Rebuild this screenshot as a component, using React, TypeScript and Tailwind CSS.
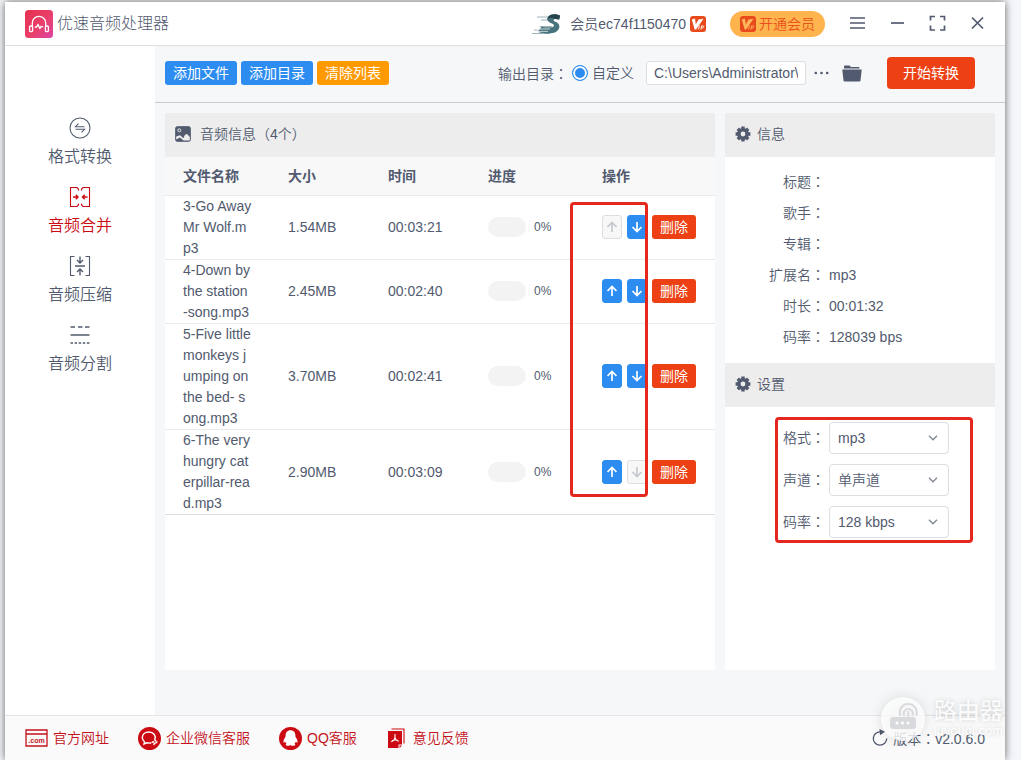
import type { ReactNode } from "react";

type AudioFile = { name: string; size: string; time: string; progress: number };

const files: AudioFile[] = [
  { name: "3-Go Away Mr Wolf.mp3", size: "1.54MB", time: "00:03:21", progress: 0 },
  { name: "4-Down by the station-song.mp3", size: "2.45MB", time: "00:02:40", progress: 0 },
  { name: "5-Five little monkeys jumping on the bed- song.mp3", size: "3.70MB", time: "00:02:41", progress: 0 },
  { name: "6-The very hungry caterpillar-read.mp3", size: "2.90MB", time: "00:03:09", progress: 0 },
];

const details = [
  { label: "标题", value: "" },
  { label: "歌手", value: "" },
  { label: "专辑", value: "" },
  { label: "扩展名", value: "mp3" },
  { label: "时长", value: "00:01:32" },
  { label: "码率", value: "128039 bps" },
];

const settings = [
  { id: "format", label: "格式", options: ["mp3", "wav", "flac"] },
  { id: "channel", label: "声道", options: ["单声道", "立体声"] },
  { id: "bitrate", label: "码率", options: ["128 kbps", "192 kbps", "320 kbps"] },
];

/* Full-width colon, centred in its cell. */
function Colon() {
  return <span className="font-['Noto_Sans_CJK_TC',sans-serif]">：</span>;
}

function LogoIcon() {
  return (
    <svg viewBox="0 0 28 28" className="size-7" aria-hidden="true">
      <defs>
        <linearGradient id="logo" x1="0" y1="0" x2="1" y2="1">
          <stop offset="0" stopColor="#e5304f" />
          <stop offset="0.55" stopColor="#ea3f6b" />
          <stop offset="1" stopColor="#dc45a4" />
        </linearGradient>
      </defs>
      <rect width="28" height="28" rx="3.5" fill="url(#logo)" />
      <g fill="none" stroke="#fff" strokeWidth="1.3" strokeLinecap="round" strokeLinejoin="round">
        <path d="M7.300 16.500V13a6.700 6.700 0 0 1 13.400 0v3.500" />
        <rect x="4.600" y="16" width="3" height="5.600" rx="1" />
        <rect x="20.400" y="16" width="3" height="5.600" rx="1" />
        <path d="M10.300 17h1.400l1.200-2.600 2 4.200 1.200-2.300 1.600.5" />
      </g>
    </svg>
  );
}

function AvatarIcon() {
  return (
    <svg viewBox="0 0 30 24" className="h-6 w-[30px]" aria-hidden="true">
      <path d="M5 5h13M9 8h8M2 18h18M0 21.500h18M8 14.500h12" stroke="#9db3b8" strokeWidth="1" />
      <path d="M28 3.800C25 1.800 19 1.600 16.500 4.500c-2.500 3.200-.5 5.700 3.500 7 2.500.9 2.800 3.300-.2 3.700-3.800.4-7.300 0-10.300-.5L6 20c7 1.800 14.500 2.400 18.500-.4 4.500-3.300 3.500-8-1-9.800-2.600-1-2.500-2.900.2-2.900 1.200 0 2.300.2 3.500.6z" fill="#47737d" />
      <path d="M28 3.800C25 1.800 19 1.600 16.500 4.500c-1 1.300-1.300 2.600-1 3.700 1-2.500 4-3.200 7-1.200.4-.1.800-.1 1.200-.1 1.200 0 2.300.2 3.500.6z" fill="#26424c" />
      <path d="M4 17h14M3 19.400h13" stroke="#fff" strokeWidth=".7" />
    </svg>
  );
}

function VipIcon({ muted = false }: { muted?: boolean }) {
  const ink = muted ? "#ffb55a" : "#fff";
  return (
    <svg viewBox="0 0 16 16" className="size-4 shrink-0" aria-hidden="true">
      <rect width="16" height="16" rx="3" fill="#e94a1c" />
      <path d="M1.800 3.500L5 2.600l.8 5.600 2.700-4.600 5-.8-7.400 10.700H4.600z" fill={ink} />
      <path d="M9.300 9.500l-.7 4M10.900 13.500l.7-3.700h1.300c1.300 0 1 2.100-.4 2.100h-1.200" stroke={ink} strokeWidth=".9" fill="none" />
    </svg>
  );
}

const windowIcons: { label: string; icon: ReactNode }[] = [
  { label: "菜单", icon: <path d="M1 3h15M1 8h15M1 13h15" /> },
  { label: "最小化", icon: <path d="M2 8h13" /> },
  { label: "最大化", icon: <path d="M1.500 5.500V1.500H6M11 1.500h4.500v4M15.500 10.500v4.500H11M6 15H1.500v-4.500" /> },
  { label: "关闭", icon: <path d="M3 2.500l11 11M14 2.500L3 13.500" /> },
];

function Header() {
  return (
    <header className="flex h-11 items-center border-b border-[#dcdee2] bg-white pr-2 pl-5">
      <div className="flex items-center gap-1">
        <LogoIcon />
        <h1 className="text-base font-light">优速音频处理器</h1>
      </div>
      <div className="ml-auto flex items-center">
        <AvatarIcon />
        <span className="ml-2">会员ec74f1150470</span>
        <span className="ml-1 flex"><VipIcon /></span>
        <button type="button" className="ml-6 flex h-[26px] items-center gap-[3px] rounded-full bg-[#ffb44d] px-[10px] text-[#e9511c]">
          <VipIcon muted />
          开通会员
        </button>
        <div className="ml-3 flex">
          {windowIcons.map((item) => (
            <button key={item.label} type="button" aria-label={item.label} className="flex h-8 w-10 items-center justify-center">
              <svg viewBox="0 0 17 17" className="size-[17px]" fill="none" stroke="#515a6e" strokeWidth="1.700">
                {item.icon}
              </svg>
            </button>
          ))}
        </div>
      </div>
    </header>
  );
}

const navItems: { label: string; active?: boolean; icon: ReactNode }[] = [
  {
    label: "格式转换",
    icon: (
      <>
        <circle cx="11" cy="11" r="10" />
        <path d="M15.500 9.700H6.500l3-3M6.500 12.300h9l-3 3" />
      </>
    ),
  },
  {
    label: "音频合并",
    active: true,
    icon: (
      <>
        <path d="M9.500 4.500V3L8 1.500H1.500v19H8L9.500 19v-1.500M12.500 4.500V3L14 1.500h6.500v19H14L12.500 19v-1.500" />
        <path d="M4 11h5M6.800 8.800L9 11l-2.200 2.200M18.500 11h-5M15.700 8.800L13.500 11l2.200 2.200" strokeWidth="1.400" />
      </>
    ),
  },
  {
    label: "音频压缩",
    icon: (
      <>
        <path d="M5.500 1.500h-4v19h4M16.500 1.500h4v19h-4" />
        <path d="M6 11h10M11 1.500v6.200M8 5l3 3 3-3M11 20.500v-6.200M8 17l3-3 3 3" strokeWidth="1.400" />
      </>
    ),
  },
  {
    label: "音频分割",
    icon: (
      <>
        <path d="M1.500 3h4.500M9 3h4.500M16 3h4.500" strokeWidth="1.500" />
        <path d="M1.500 11h19" strokeWidth="1.500" />
        <path d="M1.500 19h19" strokeWidth="1.500" strokeDasharray="2.500 1.600" />
      </>
    ),
  },
];

function Sidebar() {
  return (
    <nav className="flex w-[150px] shrink-0 flex-col items-center gap-[17px] bg-white pt-[71px]">
      {navItems.map((item) => (
        <a key={item.label} href="#" className={item.active ? "flex flex-col items-center gap-[6px] text-[#cc0a12]" : "flex flex-col items-center gap-[6px]"}>
          <svg viewBox="0 0 22 22" className="size-[22px]" fill="none" stroke="currentColor" strokeWidth="1.100" aria-hidden="true">
            {item.icon}
          </svg>
          <span className="text-base leading-6 font-[350]">{item.label}</span>
        </a>
      ))}
    </nav>
  );
}

function Toolbar() {
  return (
    <div className="flex h-[57px] items-center border-b border-[#c9cbd0] pr-[30px] pb-[2px] pl-[10px]">
      <div className="flex gap-1 font-normal text-white">
        <button type="button" className="h-6 rounded-[3px] bg-[#2d8cf0] px-2">添加文件</button>
        <button type="button" className="h-6 rounded-[3px] bg-[#2d8cf0] px-2">添加目录</button>
        <button type="button" className="h-6 rounded-[3px] bg-[#ff9900] px-2">清除列表</button>
      </div>
      <div className="ml-auto flex items-center">
        <span className="leading-5">输出目录<Colon /></span>
        <label className="ml-1 flex items-center gap-1">
          <input
            type="radio"
            name="output"
            defaultChecked
            className="size-4 appearance-none rounded-full border border-[#2d8cf0] bg-[#2d8cf0] shadow-[inset_0_0_0_2px_#fff]"
          />
          自定义
        </label>
        <input
          aria-label="输出目录"
          defaultValue="C:\Users\Administrator\Desktop"
          className="ml-3 h-6 w-40 rounded-[3px] border border-[#dcdee2] bg-white px-[7px]"
        />
        <button type="button" aria-label="浏览" className="ml-2 flex h-6 w-4 items-center">
          <svg viewBox="0 0 16 4" className="h-1 w-4" fill="#515a6e">
            <circle cx="1.800" cy="2" r="1.300" />
            <circle cx="7.500" cy="2" r="1.300" />
            <circle cx="13.200" cy="2" r="1.300" />
          </svg>
        </button>
        <button type="button" aria-label="打开目录" className="ml-3 flex h-6 w-5 items-center">
          <svg viewBox="0 0 20 17" className="h-[17px] w-5" fill="#515a6e">
            <path d="M2 3.500V1.500Q2 .5 3 .5h4.500l1.500 1.500h7.500q1 0 1 1v.5z" />
            <path d="M.8 4.500h18.400q.6 0 .5.600l-1.200 10.400q-.1 1-1.200 1H2.700q-1.100 0-1.200-1L.3 5.100q-.1-.6.500-.6z" />
          </svg>
        </button>
        <button type="button" className="ml-[25px] h-8 rounded-[4px] bg-[#ed4014] px-4 font-normal text-white">开始转换</button>
      </div>
    </div>
  );
}

function MoveButton({ direction, disabled }: { direction: "up" | "down"; disabled: boolean }) {
  return (
    <button
      type="button"
      disabled={disabled}
      aria-label={direction === "up" ? "上移" : "下移"}
      className="flex h-6 w-5 items-center justify-center rounded-[3px] border border-[#2d8cf0] bg-[#2d8cf0] text-white disabled:border-[#dcdee2] disabled:bg-[#f7f7f7] disabled:text-[#c5c8ce]"
    >
      <svg viewBox="0 0 12 12" className="size-3 shrink-0" fill="none" stroke="currentColor" strokeWidth="1.700" aria-hidden="true">
        {direction === "up" ? <path d="M6 11V2M1.500 6L6 1.500 10.500 6" /> : <path d="M6 1v9M1.500 6L6 10.500 10.500 6" />}
      </svg>
    </button>
  );
}

function FilePanel() {
  return (
    <section className="relative min-w-0 flex-1 bg-white">
      <h2 className="flex h-11 items-center gap-[9px] bg-[#ededed] px-[10px] pb-[2px]">
        <svg viewBox="0 0 16 16" className="size-4" aria-hidden="true">
          <rect x=".7" y=".7" width="14.600" height="14.600" rx="1.500" fill="#515a6e" stroke="#515a6e" />
          <circle cx="4.300" cy="4.300" r="1.500" fill="none" stroke="#ededed" strokeWidth="1" />
          <path d="M1.200 10.500L5 9.200l3.500 3 1-2.700q2-3.200 4 0l1.300 1.500v3.500H8.500L5 11.500l-3.800 2z" fill="#ededed" />
        </svg>
        音频信息（4个）
      </h2>
      <table className="w-full table-fixed border-collapse text-left">
        <colgroup>
          <col className="w-[105px]" />
          <col className="w-[100px]" />
          <col className="w-[100px]" />
          <col className="w-[114px]" />
          <col />
        </colgroup>
        <thead className="bg-[#f8f8f9]">
          <tr className="h-[38px] border-b border-[#e8eaec]">
            {["文件名称", "大小", "时间", "进度", "操作"].map((title) => (
              <th key={title} scope="col" className="px-[18px] font-bold">{title}</th>
            ))}
          </tr>
        </thead>
        <tbody>
          {files.map((file, index) => (
            <tr key={file.name} className="border-b border-[#e8eaec] last:border-[#dcdee2]">
              <td className="px-[18px] leading-[21px] break-all">{file.name}</td>
              <td className="px-[18px]">{file.size}</td>
              <td className="px-[18px]">{file.time}</td>
              <td className="pl-[18px]">
                <div className="flex items-center gap-2">
                  <div className="h-5 w-[38px] overflow-hidden rounded-full bg-[#f3f3f3]">
                    <div className="h-full bg-[#2d8cf0]" style={{ width: `${file.progress}%` }} />
                  </div>
                  <span className="text-xs">{file.progress}%</span>
                </div>
              </td>
              <td className="pl-[18px]">
                <div className="flex gap-[5px]">
                  <MoveButton direction="up" disabled={index === 0} />
                  <MoveButton direction="down" disabled={index === files.length - 1} />
                  <button type="button" className="h-6 rounded-[3px] bg-[#ed4014] px-2 font-normal text-white">删除</button>
                </div>
              </td>
            </tr>
          ))}
        </tbody>
      </table>
      <div className="pointer-events-none absolute top-[89px] left-[405px] h-[295px] w-[78px] rounded-[4px] border-3 border-[#e5281e]" />
    </section>
  );
}

function GearHeading({ children }: { children: ReactNode }) {
  return (
    <h2 className="flex h-11 items-center gap-[6px] bg-[#ededed] px-[10px] pb-[2px]">
      <svg viewBox="0 0 16 16" className="size-4" aria-hidden="true">
        <circle cx="8" cy="8" r="5.900" fill="#515a6e" />
        <g stroke="#515a6e" strokeWidth="3.400" strokeLinejoin="round">
          <path d="M8 .6v14.800M.6 8h14.800M2.800 2.800l10.400 10.400M13.200 2.800L2.800 13.200" />
        </g>
        <circle cx="8" cy="8" r="2.400" fill="#ededed" />
      </svg>
      {children}
    </h2>
  );
}

function InfoPanel() {
  return (
    <aside className="w-[270px] shrink-0 bg-white">
      <GearHeading>信息</GearHeading>
      <dl className="pt-[9px] pb-[11px]">
        {details.map((item) => (
          <div key={item.label} className="flex h-[31px] items-center gap-1">
            <dt className="w-[100px] text-right">{item.label}<Colon /></dt>
            <dd>{item.value}</dd>
          </div>
        ))}
      </dl>
      <GearHeading>设置</GearHeading>
      <div className="relative flex flex-col gap-[10px] pt-[15px]">
        {settings.map((item) => (
          <div key={item.id} className="flex items-center gap-1">
            <label htmlFor={item.id} className="w-[100px] pb-[2px] text-right">{item.label}<Colon /></label>
            <div className="relative w-[120px]">
              <select id={item.id} className="h-8 w-full appearance-none rounded-[4px] border border-[#dcdee2] bg-white px-2">
                {item.options.map((option) => (
                  <option key={option}>{option}</option>
                ))}
              </select>
              <svg viewBox="0 0 10 6" className="pointer-events-none absolute top-[13px] right-[11px] h-[6px] w-[10px]" fill="none" stroke="#808695" strokeWidth="1.300" aria-hidden="true">
                <path d="M1 .8l4 4 4-4" />
              </svg>
            </div>
          </div>
        ))}
        <div className="pointer-events-none absolute top-[10px] left-[50px] h-[126px] w-[198px] rounded-[4px] border-3 border-[#e5281e]" />
      </div>
    </aside>
  );
}

const footerLinks: { label: string; icon: ReactNode }[] = [
  {
    label: "官方网址",
    icon: (
      <svg viewBox="0 0 23 18" className="h-[18px] w-[23px]" aria-hidden="true">
        <path d="M1 1h21v16H1zM1 5h21" fill="none" stroke="#c4121a" strokeWidth="1.300" />
        <text x="11.500" y="14.300" textAnchor="middle" fontSize="7" fontWeight="bold" fill="#c4121a">.com</text>
      </svg>
    ),
  },
  {
    label: "企业微信客服",
    icon: (
      <svg viewBox="0 0 23 23" className="size-[23px]" aria-hidden="true">
        <circle cx="11.500" cy="11.500" r="11.500" fill="#cc0a12" />
        <path d="M16.800 12.500c1.500-4-1.300-7.500-5.800-7.500-4 0-6.700 2.400-6.700 5.600 0 2 .9 3.200 2.200 4.200l-.5 2.200 2.800-1.200c1.500.4 3 .4 4.500 0" fill="none" stroke="#fff" strokeWidth="1.400" />
        <path d="M16.800 12.800l1 1.200M19 15l-1.200 1M14.300 15.300l1.300-.6M16 17.500l.4-1.200" stroke="#fff" strokeWidth="1.500" strokeLinecap="round" />
      </svg>
    ),
  },
  {
    label: "QQ客服",
    icon: (
      <svg viewBox="0 0 23 23" className="size-[23px]" aria-hidden="true">
        <circle cx="11.500" cy="11.500" r="11.500" fill="#cc0a12" />
        <path d="M11.500 3.300c-3.200 0-5 2.300-4.900 5.200 0 1-.2 1.500-.7 2.300-1.100 1.800-1.700 3.300-1.300 4.600.3.700 1-.1 1.500-.9.200 1 .7 1.700 1.400 2.300-1.300.6-1.100 2 .9 2 1.400 0 2.400-.3 3.100-.9.700.6 1.700.9 3.100.9 2 0 2.200-1.400.9-2 .7-.6 1.200-1.300 1.400-2.300.5.800 1.200 1.600 1.500.9.400-1.300-.2-2.800-1.300-4.600-.5-.8-.7-1.300-.7-2.300.1-2.900-1.700-5.200-4.900-5.200z" fill="#fff" />
      </svg>
    ),
  },
  {
    label: "意见反馈",
    icon: (
      <svg viewBox="0 0 22 21" className="h-[21px] w-[22px]" aria-hidden="true">
        <path d="M5.500 1H18v14.500" fill="none" stroke="#cc0a12" strokeWidth="1.100" />
        <path d="M2 3h14v13.500h-3.500V20H2z" fill="#cc0a12" />
        <path d="M13.500 20v-2.500H16z" fill="#cc0a12" />
        <path d="M9 6v4M9 9.500q-.5 3-3.800 4.300M9 9.500q.5 2.700 3.800 3.800M6 12.800q3-1.400 6-.3" fill="none" stroke="#fff" strokeWidth="1.100" />
      </svg>
    ),
  },
];

function Footer() {
  return (
    <footer className="relative flex h-[45px] items-center border-t border-[#e4e6ea] bg-[#fafafa] px-5">
      <div className="flex gap-[29px] text-[#c4121a]">
        {footerLinks.map((item) => (
          <a key={item.label} href="#" className="flex items-center gap-[5px]">
            {item.icon}
            {item.label}
          </a>
        ))}
      </div>
      <div className="ml-auto flex items-center gap-1">
        <svg viewBox="0 0 18 18" className="size-[18px]" aria-hidden="true">
          <path d="M9.500 2.800A6.700 6.700 0 1 0 15.700 9.500" fill="none" stroke="#515a6e" strokeWidth="1.300" />
          <path d="M8.500 0l5.500 2.800-5 3.400z" fill="#515a6e" />
        </svg>
        <span>版本<Colon />v2.0.6.0</span>
      </div>
      <div className="pointer-events-none absolute right-[2px] bottom-[18px] flex items-center gap-2">
        <svg viewBox="0 0 46 46" className="size-[46px] drop-shadow-[0_0_6px_rgba(0,0,0,0.15)]" aria-hidden="true">
          <circle cx="23" cy="23" r="22" fill="#fff" opacity=".8" />
          <g fill="none" stroke="#d9dadd" strokeWidth="2">
            <path d="M20.500 20a8.500 8.500 0 1 1 15.500 0M24.500 20a4.500 4.500 0 1 1 7.500 0" />
          </g>
          <rect x="10" y="21" width="26" height="12" rx="3" fill="#d9dadd" />
          <path d="M28.300 15v8" stroke="#d9dadd" strokeWidth="2" />
          <g fill="#fff">
            <circle cx="17" cy="27" r="1.500" />
            <circle cx="22.500" cy="27" r="1.500" />
            <circle cx="28" cy="27" r="1.500" />
          </g>
        </svg>
        <div className="flex flex-col font-normal text-white/90 [text-shadow:0_0_5px_rgba(0,0,0,0.2)]">
          <span className="text-[23px] leading-6">路由器</span>
          <span className="text-[13px] leading-4">luyouqi.com</span>
        </div>
      </div>
    </footer>
  );
}

export default function App() {
  return (
    <div className="flex min-h-screen flex-col bg-[#f4f6f9] pt-[2px] pr-4 pl-[5px] font-['Liberation_Sans','Noto_Sans_CJK_SC',sans-serif] text-sm font-[350] text-[#515a6e]">
      <div className="flex flex-1 flex-col bg-[#f5f7f9] shadow-[0_0_8px_rgba(0,0,0,0.6)]">
        <Header />
        <div className="flex flex-1">
          <Sidebar />
          <main className="flex min-w-0 flex-1 flex-col">
            <Toolbar />
            <div className="flex flex-1 gap-[10px] px-[10px] pt-[10px] pb-[45px]">
              <FilePanel />
              <InfoPanel />
            </div>
          </main>
        </div>
        <Footer />
      </div>
    </div>
  );
}
